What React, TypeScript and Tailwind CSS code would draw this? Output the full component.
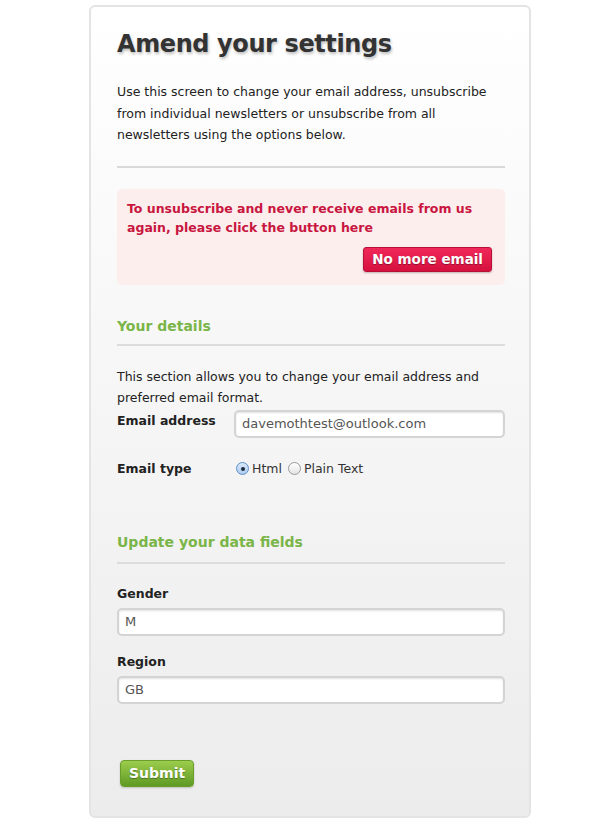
import React from 'react';

const font = { fontFamily: '"DejaVu Sans", Verdana, sans-serif' };

const Radio: React.FC<{ checked?: boolean; label: string }> = ({ checked, label }) => (
  <label className="flex items-center">
    <span
      className={`w-[13px] h-[13px] rounded-full border flex items-center justify-center ${
        checked
          ? 'border-[#5b8ec9] bg-gradient-to-b from-[#dbe9fa] to-[#aecbef]'
          : 'border-[#9a9a9a] bg-gradient-to-b from-white to-[#e4e4e4]'
      }`}
    >
      {checked && <span className="w-[4px] h-[4px] rounded-full bg-[#1d2a3a]" />}
    </span>
    <span className="ml-[3px]">{label}</span>
  </label>
);

const TextInput: React.FC<{ value: string; className?: string }> = ({ value, className = '' }) => (
  <input
    readOnly
    value={value}
    className={`h-[28px] rounded-[5px] border-2 border-[#d4d4d4] bg-white px-[6px] text-[13px] text-[#555] shadow-[inset_0_1px_2px_rgba(0,0,0,0.12)] outline-none ${className}`}
    style={font}
  />
);

export default function App() {
  return (
    <div className="min-h-[823px] bg-white pt-[5px]" style={font}>
      <div className="ml-[89px] w-[442px] h-[813px] rounded-[6px] border-2 border-[#e4e4e4] bg-gradient-to-b from-white to-[#ececec] pl-[26px] pr-[24px] text-[12.5px] text-[#222]">
        <h1 className="mt-[20px] text-[24px] font-bold leading-[34px] tracking-[-0.4px] text-[#333] [text-shadow:1px_2px_3px_rgba(0,0,0,0.25)]">
          Amend your settings
        </h1>
        <p className="mt-[20px] leading-[21.5px]">
          Use this screen to change your email address, unsubscribe from individual newsletters or unsubscribe from all
          newsletters using the options below.
        </p>
        <div className="mt-[20px] h-[2px] bg-[#d9d9d9]" />

        <div className="mt-[21px] rounded-[5px] bg-[#fdeeee] px-[10px] pt-[10px] pb-[13px]">
          <p className="font-bold leading-[19px] text-[#c8163f] pr-[10px]">
            To unsubscribe and never receive emails from us again, please click the button here
          </p>
          <div className="mt-[10px] flex justify-end pr-[3px]">
            <button className="h-[25px] px-[8px] rounded-[3px] border border-[#b80f38] bg-gradient-to-b from-[#f0285a] to-[#d50f3e] text-[13.5px] font-bold text-white shadow-[0_1px_2px_rgba(0,0,0,0.25)] [text-shadow:0_1px_1px_rgba(0,0,0,0.35)]">
              No more email
            </button>
          </div>
        </div>

        <h2 className="mt-[31px] text-[14px] font-bold leading-[20px] text-[#7ab548]">Your details</h2>
        <div className="mt-[8px] h-[2px] bg-[#dcdcdc]" />
        <p className="mt-[20px] leading-[21px]">
          This section allows you to change your email address and preferred email format.
        </p>
        <div className="mt-[2px] flex">
          <div className="w-[117px] pt-[2px] font-bold">Email address</div>
          <TextInput value="davemothtest@outlook.com" className="flex-1" />
        </div>
        <div className="mt-[21px] flex leading-[20px]">
          <div className="w-[119px] font-bold">Email type</div>
          <div className="flex items-center gap-[6px] text-[#333]">
            <Radio checked label="Html" />
            <Radio label="Plain Text" />
          </div>
        </div>

        <h2 className="mt-[53px] text-[14px] font-bold leading-[20px] text-[#7ab548]">Update your data fields</h2>
        <div className="mt-[10px] h-[2px] bg-[#dcdcdc]" />

        <div className="mt-[20px] font-bold leading-[20px]">Gender</div>
        <TextInput value="M" className="mt-[4px] w-full" />
        <div className="mt-[16px] font-bold leading-[20px]">Region</div>
        <TextInput value="GB" className="mt-[4px] w-full" />

        <button className="mt-[56px] ml-[3px] h-[27px] px-[8px] rounded-[4px] border border-[#6a9e2a] bg-gradient-to-b from-[#9ccd4c] to-[#5f9a24] text-[14px] font-bold text-white shadow-[0_1px_2px_rgba(0,0,0,0.2)] [text-shadow:0_1px_1px_rgba(0,0,0,0.35)]">
          Submit
        </button>
      </div>
    </div>
  );
}
